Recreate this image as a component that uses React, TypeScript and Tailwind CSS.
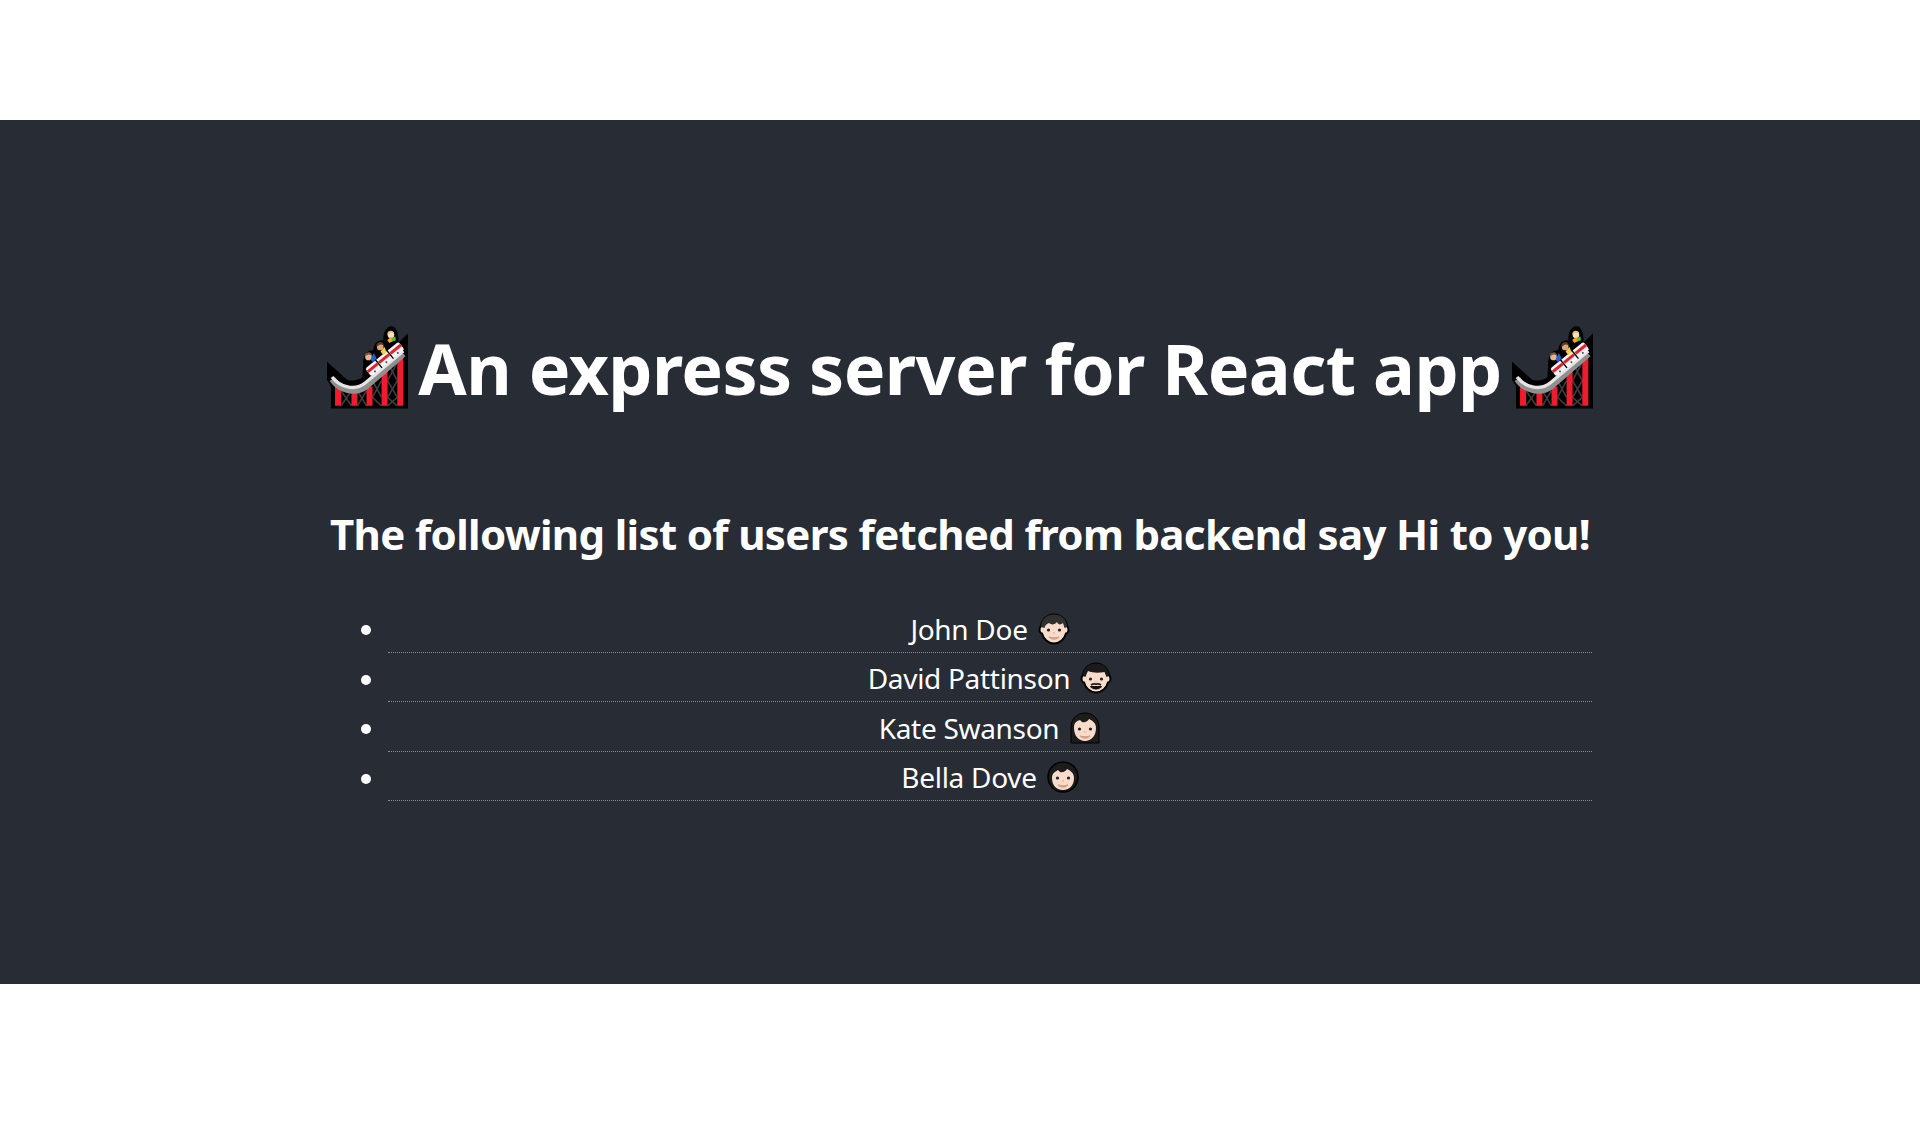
import React from "react"

const USERS = [
  { name: "John Doe", face: "boy" },
  { name: "David Pattinson", face: "man" },
  { name: "Kate Swanson", face: "woman" },
  { name: "Bella Dove", face: "girl" },
]

// coordinates are the 3x zoom pixels of the emoji
const Coaster = () => (
  <svg viewBox="12 12 242 250" className="h-[84px] w-[81px] shrink-0" aria-hidden="true">
    <path d="M12 118L72 172C90 178 108 172 118 165L120 120C122 95 135 82 150 84C152 62 165 52 180 54C180 25 192 12 204 12C216 12 226 25 226 60L254 34V258H24V192L12 172Z" fill="#000" />
    <path d="M54 205L85 250M85 205L54 250M103 205L130 250M130 205L103 250M148 175L175 225M175 175L148 225M148 225L175 250M193 120L222 175M222 120L193 175M193 175L222 225M222 175L193 225M193 225L222 250M222 225L193 250" stroke="#3c3c3c" strokeWidth="5" fill="none" />
    <path d="M36 190H54V250H36ZM85 205H103V250H85ZM130 192H148V250H130ZM175 145H193V250H175ZM222 98H240V250H222Z" fill="#ed1c2e" />
    <path d="M28 170C50 202 95 217 130 190L240 94" stroke="#8f8f8f" strokeWidth="20" fill="none" />
    <path d="M27 164C50 194 95 207 126 182L240 86" stroke="#e4e4e4" strokeWidth="10" fill="none" />
    <g transform="rotate(-39 186 112)">
      <rect x="122" y="95" width="128" height="30" rx="7" fill="#f4f4f4" />
      <path d="M122 103H160V112H122ZM166 103H204V112H166ZM210 103H250V112H210Z" fill="#e5202e" />
      <path d="M163 88V125M207 88V125" stroke="#000" strokeWidth="4" />
      <circle cx="140" cy="120" r="3" fill="#555" />
      <circle cx="184" cy="120" r="3" fill="#555" />
      <circle cx="228" cy="120" r="3" fill="#555" />
    </g>
    <circle cx="136" cy="104" r="10" fill="#e8b58f" />
    <path d="M126 102A10 10 0 0 1 146 99L136 97Z" fill="#7a5a40" />
    <path d="M142 112L152 92L160 108L150 120Z" fill="#1f63d6" />
    <circle cx="171" cy="74" r="10" fill="#d9a679" />
    <path d="M160 74A11 11 0 0 1 182 68L170 67Z" fill="#5b3a1e" />
    <path d="M172 88L184 74L190 90L180 98Z" fill="#f5d33f" />
    <circle cx="203" cy="38" r="10" fill="#fbe0c3" />
    <path d="M193 38A10 10 0 0 1 213 34L203 31Z" fill="#e8c27a" />
    <path d="M192 53L204 44L210 56L198 62Z" fill="#f5a623" />
    <path d="M205 48L216 42L218 54L208 58Z" fill="#55c02e" />
  </svg>
)

const Face = ({ kind }: { kind: string }) => (
  <svg viewBox="0 0 32 32" className="ml-[10px] h-8 w-8 shrink-0" aria-hidden="true">
    {kind === "woman" ? (
      <>
        <path d="M2 31V15C2 6 9 1 16 1S30 6 30 15V31Z" fill="#1c1c1c" stroke="#000" strokeWidth="1" />
        <path d="M5 16C5 10 8 9 11 8L13 10C16 11 19 9 20 7C24 9 27 11 27 16C27 24 22 29 16 29S5 24 5 16Z" fill="#f8dccb" />
      </>
    ) : kind === "girl" ? (
      <>
        <circle cx="16" cy="16" r="15" fill="#1c1c1c" stroke="#000" strokeWidth="1.5" />
        <path d="M5 17C5 12 8 11 11 9L13 11C16 12 19 10 20 8C24 10 27 12 27 17C27 25 22 29 16 29S5 25 5 17Z" fill="#f8dccb" />
      </>
    ) : (
      <>
        <path d="M1.5 17C1.5 19 3 20.5 4 20.5C5.5 26 10 30.5 16 30.5S26.5 26 28 20.5C29 20.5 30.5 19 30.5 17C30.5 15 30 14 29 13C28 6 22 1.5 16 1.5S4 6 3 13C2 14 1.5 15 1.5 17Z" fill="#f8dccb" stroke="#000" strokeWidth="2" />
        {kind === "boy"
          ? <path d="M3 14C3 6 9 1.5 16 1.5S29 6 29 14L26.5 15L25 10C23 12 20 12 19 9C17 12 13 12 11 10C9 11 7 12 6.5 15Z" fill="#303030" />
          : <path d="M3 14C3 6 9 1.5 16 1.5S29 6 29 14L26.5 15L24.5 10C20 11 12 11 8 9C7 11 6 13 5.5 15Z" fill="#1a1a1a" />}
      </>
    )}
    <circle cx="10.5" cy="17" r="1.6" fill="#222" />
    <circle cx="21.5" cy="17" r="1.6" fill="#222" />
    <path d="M14.8 19.5H17.2L16 21Z" fill="#d9a98c" />
    {kind === "man" ? (
      <>
        <path d="M11 23C13 21.8 15 21.8 16 22.4C17 21.8 19 21.8 21 23" stroke="#1a1a1a" strokeWidth="1.6" fill="none" />
        <path d="M10 24H22C21 28.5 11 28.5 10 24Z" fill="#111" />
      </>
    ) : (
      <path d="M11 24C14 26.5 18 26.5 21 24C18 25 14 25 11 24Z" fill="#d3a184" stroke="#d3a184" strokeWidth="1.2" />
    )}
  </svg>
)

export default function App() {
  return (
    <div className="bg-white pt-[120px] pb-[144px] font-['Noto_Sans','Open_Sans',sans-serif]">
      <div className="flex h-[864px] flex-col items-center bg-[#282c34] pt-[205px] text-white">
        <div className="w-[1264px]">
          <h1 className="flex items-center justify-center gap-[10px] whitespace-nowrap text-[70px] leading-[86px] font-bold tracking-[-0.6px]">
            <Coaster />
            An express server for React app
            <Coaster />
          </h1>
          <h2 className="mt-[96px] text-center text-[42px] leading-[54px] font-bold tracking-[-0.65px]">
            The following list of users fetched from backend say Hi to you!
          </h2>
          <ul className="mt-[42px] list-disc pl-[60px]">
            {USERS.map((u) => (
              <li key={u.name} className="h-[49.6px] border-b border-dotted border-[#8a8a8a] text-center text-[28px] leading-[52px] tracking-[-0.3px]">
                <span className="inline-flex h-[48px] items-center align-top pt-[3px]">
                  {u.name}
                  <Face kind={u.face} />
                </span>
              </li>
            ))}
          </ul>
        </div>
      </div>
    </div>
  )
}
